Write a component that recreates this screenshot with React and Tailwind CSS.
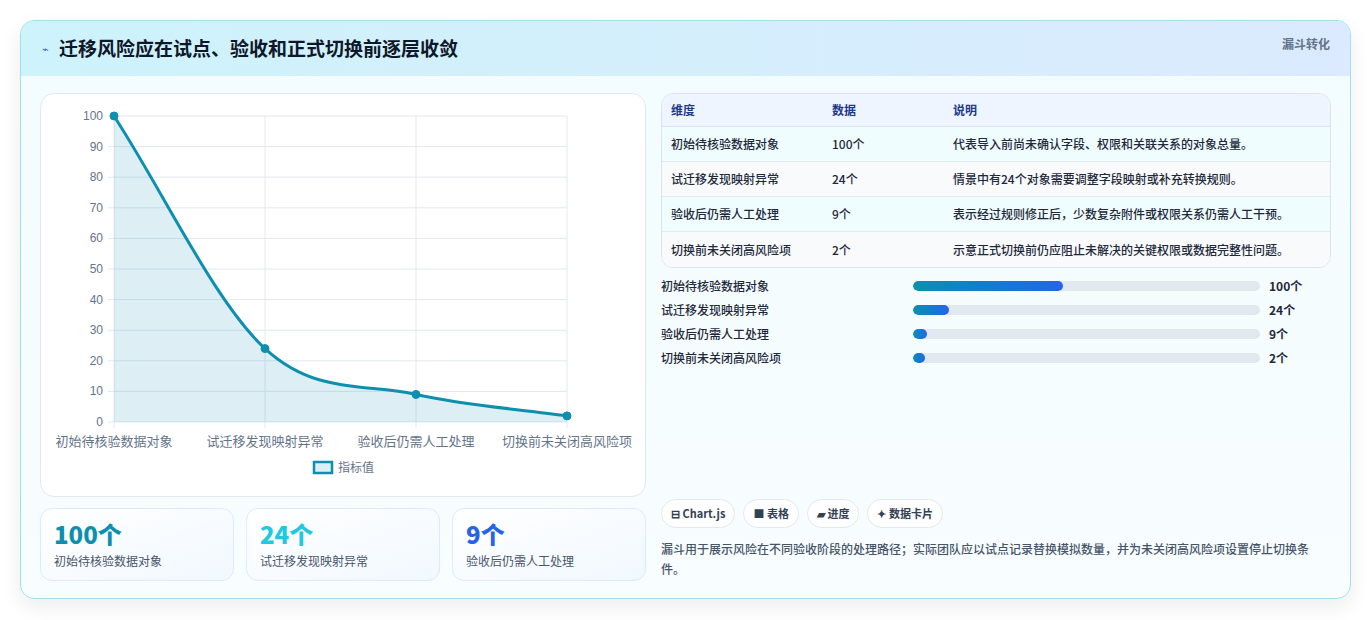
import React from 'react'

const rows = [
  { name: '初始待核验数据对象', value: 100, note: '代表导入前尚未确认字段、权限和关联关系的对象总量。', pct: 43.2 },
  { name: '试迁移发现映射异常', value: 24, note: '情景中有24个对象需要调整字段映射或补充转换规则。', pct: 10.4 },
  { name: '验收后仍需人工处理', value: 9, note: '表示经过规则修正后，少数复杂附件或权限关系仍需人工干预。', pct: 3.9 },
  { name: '切换前未关闭高风险项', value: 2, note: '示意正式切换前仍应阻止未解决的关键权限或数据完整性问题。', pct: 3.5 },
]

const X0 = 113, X1 = 566, Y0 = 421, Y1 = 115
const xs = [113, 264, 415, 566]
const ys = rows.map(r => Y0 - (r.value / 100) * (Y0 - Y1))

// monotone cubic path
function monotone(xs, ys) {
  const n = xs.length
  const d = [], m = []
  for (let i = 0; i < n - 1; i++) d.push((ys[i + 1] - ys[i]) / (xs[i + 1] - xs[i]))
  m[0] = d[0]; m[n - 1] = d[n - 2]
  for (let i = 1; i < n - 1; i++) m[i] = d[i - 1] * d[i] <= 0 ? 0 : (d[i - 1] + d[i]) / 2
  let p = `M${xs[0]},${ys[0]}`
  for (let i = 0; i < n - 1; i++) {
    const h = (xs[i + 1] - xs[i]) / 3
    p += ` C${xs[i] + h},${ys[i] + m[i] * h} ${xs[i + 1] - h},${ys[i + 1] - m[i + 1] * h} ${xs[i + 1]},${ys[i + 1]}`
  }
  return p
}

function Chart() {
  const line = monotone(xs, ys)
  const ticks = [0, 10, 20, 30, 40, 50, 60, 70, 80, 90, 100]
  return (
    <svg width="606" height="403" viewBox="40 93 606 403" className="block">
      {ticks.map(t => {
        const y = Y0 - (t / 100) * (Y0 - Y1)
        return (
          <g key={t}>
            <line x1={X0 - 6} x2={X1} y1={y} y2={y} stroke="#e2e8f0" />
            <text x={X0 - 11} y={y + 4} textAnchor="end" fontSize="12" fill="#64748b" fontFamily="Liberation Sans, sans-serif">{t}</text>
          </g>
        )
      })}
      {xs.map(x => <line key={x} x1={x} x2={x} y1={Y1} y2={Y0 + 6} stroke="#e2e8f0" />)}
      <path d={`${line} L${X1},${Y0} L${X0},${Y0} Z`} fill="#0e8fae" fillOpacity="0.14" />
      <path d={line} fill="none" stroke="#0e8fae" strokeWidth="3" />
      {xs.map((x, i) => <circle key={x} cx={x} cy={ys[i]} r="4" fill="#0e8fae" stroke="#0e8fae" />)}
      {rows.map((r, i) => (
        <text key={r.name} x={xs[i]} y={445} textAnchor="middle" fontSize="13" fill="#64748b" fontFamily="Noto Sans CJK SC, sans-serif">{r.name}</text>
      ))}
      <rect x="313" y="461" width="18" height="11" fill="#0e8fae" fillOpacity="0.14" stroke="#0e8fae" strokeWidth="2.5" />
      <text x="337" y="471" fontSize="12" fill="#64748b" fontFamily="Noto Sans CJK SC, sans-serif">指标值</text>
    </svg>
  )
}

export default function App() {
  return (
    <div className="w-[1372px] h-[620px] bg-white p-5 pt-5" style={{ fontFamily: '"Noto Sans CJK SC", "Noto Sans", sans-serif' }}>
      <div className="w-[1331px] h-[579px] rounded-[14px] border border-[#9fe0ea] bg-gradient-to-b from-[#f2fcfe] to-[#f8fdff] overflow-hidden shadow-[0_8px_20px_rgba(15,23,42,0.08)]">
        <div className="h-[55px] flex items-center justify-between pl-[21px] pr-5 bg-gradient-to-r from-[#cdf3fb] to-[#dbeafe]">
          <div className="flex items-center gap-[10px]">
            <span className="text-[11px] text-[#2563eb]">⌁</span>
            <span className="text-[19px] font-bold text-[#0f172a]">迁移风险应在试点、验收和正式切换前逐层收敛</span>
          </div>
          <span className="text-[12px] font-semibold text-[#64748b] self-start mt-[14px]">漏斗转化</span>
        </div>
        <div className="flex gap-[15px] px-[19px] pt-[17px]">
          <div className="w-[606px] flex flex-col gap-[11px]">
            <div className="h-[404px] rounded-[14px] border border-[#e2e8f0] bg-white overflow-hidden">
              <Chart />
            </div>
            <div className="grid grid-cols-3 gap-[12px]">
              {rows.slice(0, 3).map((r, i) => (
                <div key={r.name} className="h-[73px] rounded-[12px] border border-[#dbeafe] bg-gradient-to-br from-white to-[#f1f8ff] px-[13px] pt-[10px]">
                  <div className={`text-[24px] font-extrabold leading-[30px] ${['text-[#0e8fae]', 'text-[#22c7e0]', 'text-[#2563eb]'][i]}`}>{r.value}个</div>
                  <div className="text-[12px] text-[#475569] mt-[3px]">{r.name}</div>
                </div>
              ))}
            </div>
          </div>
          <div className="w-[672px] flex flex-col">
            <div className="rounded-[12px] border border-[#dbe3ee] bg-white overflow-hidden text-[12px]">
              <div className="flex h-[33px] items-center bg-[#eef5ff] border-b border-[#dbe3ee] text-[#1e3a8a] font-semibold">
                <div className="w-[170px] pl-[9px]">维度</div>
                <div className="w-[121px]">数据</div>
                <div>说明</div>
              </div>
              {rows.map((r, i) => (
                <div key={r.name} className={`flex h-[35px] items-center text-[#1e293b] font-medium ${i < 3 ? 'border-b border-[#e5eaf0]' : ''} ${i % 2 ? 'bg-[#f8fafc]' : 'bg-[#f0fdff]'}`}>
                  <div className="w-[170px] pl-[9px]">{r.name}</div>
                  <div className="w-[121px]">{r.value}个</div>
                  <div>{r.note}</div>
                </div>
              ))}
            </div>
            <div className="flex flex-col gap-[10px] mt-[11px]">
              {rows.map(r => (
                <div key={r.name} className="flex items-center h-[14px] text-[12px] font-medium text-[#1e293b]">
                  <div className="w-[252px]">{r.name}</div>
                  <div className="w-[347px] h-[10px] rounded-full bg-[#e2e8f0] overflow-hidden">
                    <div className="h-full rounded-full bg-gradient-to-r from-[#0e8fae] to-[#2563eb]" style={{ width: `${r.pct}%` }} />
                  </div>
                  <div className="ml-[9px] font-bold">{r.value}个</div>
                </div>
              ))}
            </div>
            <div className="flex gap-[8px] mt-[134px]">
              {['⊟ Chart.js', '■ 表格', '▰ 进度', '✦ 数据卡片'].map(t => (
                <span key={t} className="h-[29px] px-[9px] flex items-center rounded-full border border-[#e2e8f0] bg-white text-[11px] font-semibold text-[#334155]">{t}</span>
              ))}
            </div>
            <p className="mt-[11px] pr-[20px] text-[12px] leading-[20px] text-[#475569] font-medium">漏斗用于展示风险在不同验收阶段的处理路径；实际团队应以试点记录替换模拟数量，并为未关闭高风险项设置停止切换条件。</p>
          </div>
        </div>
      </div>
    </div>
  )
}
